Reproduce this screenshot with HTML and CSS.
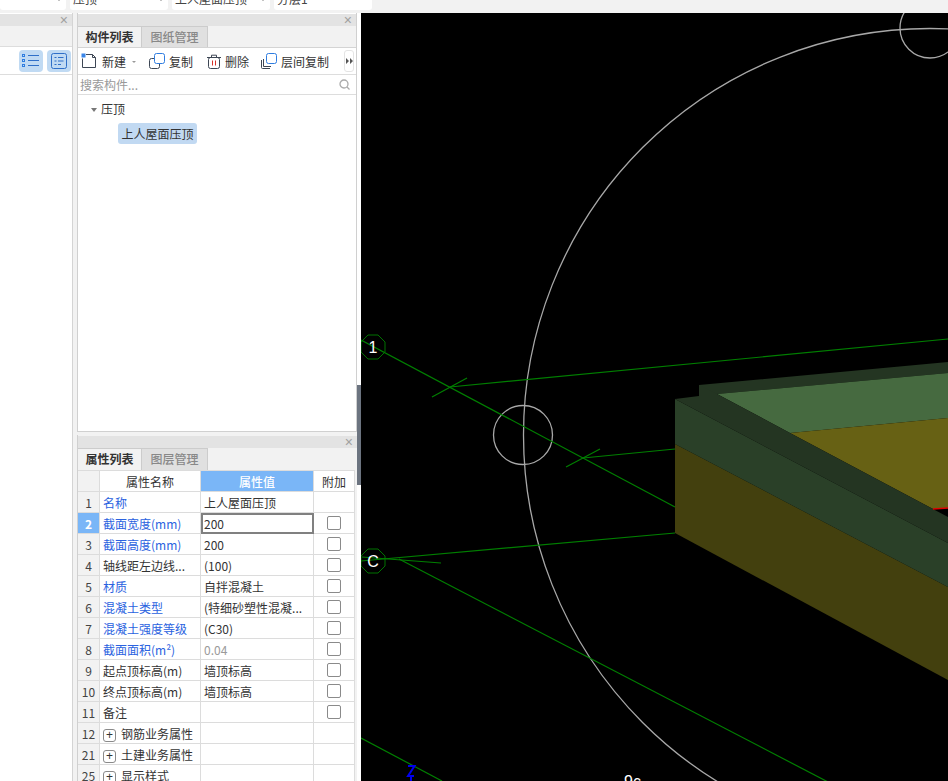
FILE: index.html
```html
<!DOCTYPE html>
<html lang="zh">
<head>
<meta charset="utf-8">
<title>构件属性</title>
<link rel="stylesheet" href="styles.css">
</head>
<body>
<div class="topbar">
  <div class="combo combo-a"><span class="arrow"></span></div>
  <div class="combo combo-b"><span>压顶</span><span class="arrow"></span></div>
  <div class="combo combo-b"><span>上人屋面压顶</span><span class="arrow"></span></div>
  <div class="combo combo-b"><span>分层1</span></div>
</div>
<div class="main">
  <aside class="left">
    <div class="panel-head"><span class="close">×</span></div>
    <div class="left-tabs"></div>
    <div class="left-tools">
      <button class="view-btn">
        <svg width="18" height="14" viewBox="0 0 18 14"><g fill="none" stroke="#2f7de0"><rect x="0.5" y="0.5" width="2" height="2"/><rect x="0.5" y="5.500" width="2" height="2"/><rect x="0.5" y="10.500" width="2" height="2"/></g><path d="M6 1.500h11M6 6.500h11M6 11.500h11" stroke="#2f6fc8"/></svg>
      </button>
      <button class="view-btn">
        <svg width="16" height="16" viewBox="0 0 16 16"><rect x="0.5" y="0.5" width="15" height="15" rx="2" fill="none" stroke="#2f6fc8"/><path d="M3.500 4.500h2M7 4.500h5.500M3.500 8h2M7 8h5.500M3.500 11.500h2M7 11.500h3" stroke="#2f6fc8"/></svg>
      </button>
    </div>
  </aside>
  <div class="middle">
    <section class="panel panel-top">
      <div class="panel-head"><span class="close">×</span></div>
      <div class="tabs">
        <div class="tab active">构件列表</div>
        <div class="tab">图纸管理</div>
      </div>
      <div class="toolbar">
        <span class="tool tool-new">
          <svg width="16" height="16" viewBox="0 0 16 16"><path d="M5 1.500h6.500l3 3v10h-13v-9" fill="none" stroke="#3d4654" stroke-linejoin="round"/><path d="M11.500 1.500v3h3" fill="none" stroke="#3d4654"/><rect x="0.5" y="0.5" width="4" height="4" fill="#3a86e8"/></svg>
          <span>新建</span>
        </span>
        <span class="drop"></span>
        <span class="tool tool-copy">
          <svg width="17" height="16" viewBox="0 0 17 16"><rect x="0.5" y="5.500" width="10" height="10" rx="2" fill="none" stroke="#3d4654"/><rect x="5.500" y="0.5" width="10" height="10" rx="2" fill="#fff" stroke="#2f7de0"/></svg>
          <span>复制</span>
        </span>
        <span class="tool tool-del">
          <svg width="14" height="15" viewBox="0 0 14 15"><path d="M0 3.500h14M4.500 3V1.200h5V3" fill="none" stroke="#3d4654"/><rect x="1.500" y="3.500" width="11" height="11" rx="2" fill="none" stroke="#3d4654"/><path d="M5.500 6.500v5M8.500 6.500v5" stroke="#d8322a"/></svg>
          <span>删除</span>
        </span>
        <span class="tool tool-layer">
          <svg width="16" height="16" viewBox="0 0 16 16"><path d="M0.5 7v7.500a1 1 0 0 0 1 1H9M2.500 6v7.500H10" fill="none" stroke="#3d4654"/><rect x="5.500" y="0.5" width="10" height="10" rx="2" fill="#fff" stroke="#2f7de0"/></svg>
          <span>层间复制</span>
        </span>
        <span class="more"><svg width="7" height="6" viewBox="0 0 7 6"><path d="M0 0l3 3-3 3zM4 0l3 3-3 3z" fill="#555"/></svg></span>
      </div>
      <div class="search">
        <span class="placeholder">搜索构件...</span>
        <svg width="11" height="11" viewBox="0 0 11 11"><circle cx="5" cy="5" r="4" fill="none" stroke="#aaa" stroke-width="1.300"/><path d="M8 8l2.500 2.500" stroke="#aaa" stroke-width="1.300"/></svg>
      </div>
      <div class="tree">
        <div class="node-root"><span class="twist"></span><span>压顶</span></div>
        <div class="node-child"><span class="node-label">上人屋面压顶</span></div>
      </div>
    </section>
    <section class="panel panel-bottom">
      <div class="panel-head"><span class="close">×</span></div>
      <div class="tabs tabs-attr">
        <div class="tab active tab-attr">属性列表</div>
        <div class="tab tab-attr">图层管理</div>
      </div>
      <table class="props">
        <colgroup><col class="c-num"><col class="c-name"><col class="c-val"><col class="c-add"></colgroup>
        <thead>
          <tr><th class="num"></th><th>属性名称</th><th class="val-head">属性值</th><th>附加</th></tr>
        </thead>
        <tbody>
          <tr><td class="num">1</td><td class="link">名称</td><td>上人屋面压顶</td><td></td></tr>
          <tr><td class="num sel">2</td><td class="link">截面宽度(mm)</td><td class="editing">200</td><td><span class="check"></span></td></tr>
          <tr><td class="num">3</td><td class="link">截面高度(mm)</td><td>200</td><td><span class="check"></span></td></tr>
          <tr><td class="num">4</td><td>轴线距左边线...</td><td>(100)</td><td><span class="check"></span></td></tr>
          <tr><td class="num">5</td><td class="link">材质</td><td>自拌混凝土</td><td><span class="check"></span></td></tr>
          <tr><td class="num">6</td><td class="link">混凝土类型</td><td>(特细砂塑性混凝...</td><td><span class="check"></span></td></tr>
          <tr><td class="num">7</td><td class="link">混凝土强度等级</td><td>(C30)</td><td><span class="check"></span></td></tr>
          <tr><td class="num">8</td><td class="link">截面面积(m²)</td><td class="muted">0.04</td><td><span class="check"></span></td></tr>
          <tr><td class="num">9</td><td>起点顶标高(m)</td><td>墙顶标高</td><td><span class="check"></span></td></tr>
          <tr><td class="num">10</td><td>终点顶标高(m)</td><td>墙顶标高</td><td><span class="check"></span></td></tr>
          <tr><td class="num">11</td><td>备注</td><td></td><td><span class="check"></span></td></tr>
          <tr><td class="num">12</td><td><span class="plus">+</span>钢筋业务属性</td><td></td><td></td></tr>
          <tr><td class="num">21</td><td><span class="plus">+</span>土建业务属性</td><td></td><td></td></tr>
          <tr><td class="num">25</td><td><span class="plus">+</span>显示样式</td><td></td><td></td></tr>
        </tbody>
      </table>
    </section>
  </div>
  <div class="splitter"><span class="grip"></span></div>
  <div class="canvas">
    <svg class="scene" viewBox="361 13 587 768" width="587" height="768">
      <g fill="none" stroke="#a8a8a8" stroke-width="1.300">
        <circle cx="930" cy="435" r="406.500"/>
        <circle cx="930" cy="28" r="30"/>
        <circle cx="523" cy="435" r="29.500"/>
      </g>
      <g fill="none" stroke="#007f00" stroke-width="1.200">
        <path d="M361 340L675 507"/>
        <path d="M450 387L948 339"/>
        <path d="M432 397L467 378"/>
        <path d="M583 458L675 449"/>
        <path d="M566 467L600 449"/>
        <path d="M361 561L675 533"/>
        <path d="M362 557L441 563"/>
        <path d="M399 559L830 783"/>
        <path d="M361 738L442 781"/>
      </g>
      <g fill="none" stroke="#007f00" stroke-width="0.900">
        <polygon points="368,335 378,335 385,342 385,352 378,359 368,359 361,352 361,342"/>
        <polygon points="368,549 378,549 385,556 385,566 378,573 368,573 361,566 361,556"/>
      </g>
      <polygon points="675,444 948,587 948,680 675,533" fill="#43400e"/>
      <polygon points="675,399 948,543 948,587 675,444" fill="#2a4028"/>
      <polygon points="699,385 948,362 948,373 717,394 699,396" fill="#243522"/>
      <polygon points="717,394 948,373 948,418 790,433" fill="#466a40"/>
      <polygon points="790,433 948,418 948,508 933,509" fill="#676114"/>
      <polygon points="675,399 699,396 699,385 717,394 790,433 948,517 948,543" fill="#243522"/>
      <path d="M933 509L948 508" stroke="#e00000" stroke-width="1.400"/>
      <path d="M408 766H414.500L408 776H414M411 776V781" fill="none" stroke="#0000ee" stroke-width="2"/>
      <text x="373" y="353" class="axis">1</text>
      <text x="373" y="567" class="axis">C</text>
      <text x="624" y="787" class="axis-num">9c</text>
    </svg>
  </div>
</div>
</body>
</html>
```
FILE: styles.css
```css
* { box-sizing: border-box; }
html, body { margin: 0; height: 100%; }
body {
  width: 948px;
  height: 781px;
  overflow: hidden;
  background: #f2f2f2;
  font-family: "Noto Sans CJK SC", "Noto Sans", sans-serif;
  font-size: 12px;
  color: #333;
  display: flex;
  flex-direction: column;
}

.topbar {
  height: 13px;
  flex: none;
  display: flex;
  align-items: flex-end;
  gap: 4px;
  padding-bottom: 3px;
  overflow: hidden;
  background: #f2f2f2;
}
.combo {
  height: 22px;
  flex: none;
  background: #fff;
  border-radius: 3px;
  display: flex;
  align-items: center;
  justify-content: space-between;
  padding: 0 4px 0 3px;
  font-size: 12px;
  line-height: 22px;
  color: #444;
}
.combo-a { width: 66px; justify-content: flex-end; }
.combo-b { width: 98px; }
.arrow { width: 0; height: 0; margin-top: 3px; border: 3px solid transparent; border-top-color: #888; }

.main { flex: 1; min-height: 0; display: flex; }

.panel-head {
  height: 12px;
  margin-top: 1px;
  flex: none;
  background: #e3e3e3;
  display: flex;
  justify-content: flex-end;
  align-items: center;
  padding-right: 4px;
}
.close { color: #a0a0a0; font: 14px/12px "Liberation Sans", sans-serif; }

.left {
  width: 73px;
  flex: none;
  background: #fff;
  border-right: 1px solid #d4d4d4;
  display: flex;
  flex-direction: column;
}
.left-tabs { height: 21px; flex: none; background: #f2f2f2; border-bottom: 1px solid #ddd; }
.left-tools {
  height: 28px;
  flex: none;
  border-bottom: 1px solid #ddd;
  display: flex;
  justify-content: flex-end;
  align-items: center;
  gap: 4px;
  padding-right: 1px;
}
.view-btn {
  width: 24px;
  height: 22px;
  padding: 0;
  border: 0;
  border-radius: 4px;
  background: #c0daf3;
  display: flex;
  align-items: center;
  justify-content: center;
}

.middle {
  width: 280px;
  margin-left: 4px;
  flex: none;
  display: flex;
  flex-direction: column;
  gap: 3px;
}
.panel {
  background: #fff;
  display: flex;
  flex-direction: column;
  overflow: hidden;
  border-left: 1px solid #d0d0d0;
}
.panel-top { height: 419px; flex: none; border-right: 1px solid #d0d0d0; border-bottom: 1px solid #d0d0d0; }
.panel-bottom { flex: 1; min-height: 0; background: #f2f2f2; }

.tabs {
  height: 22px;
  flex: none;
  display: flex;
  background: #f2f2f2;
  border-bottom: 1px solid #d4d4d4;
}
.tab {
  width: 66px;
  text-align: center;
  line-height: 19px;
  background: #e0e0e0;
  color: #888;
  font-weight: 500;
  border: 1px solid #ccc;
  border-bottom: 0;
  border-left: 0;
}
.tab.active { width: 64px; background: #f2f2f2; color: #333; font-weight: 700; border-left: 0; }
.tabs-attr { height: 22px; border-bottom: 0; }
.tab-attr { line-height: 20px; }

.toolbar {
  height: 27px;
  flex: none;
  display: flex;
  align-items: center;
  border-bottom: 1px solid #ddd;
  padding-left: 3px;
  color: #333;
}
.tool { display: flex; align-items: center; flex: none; }
.tool svg { margin-right: 4px; flex: none; }
.tool-new span { margin-left: 1px; }
.tool-copy { margin-left: 13px; }
.tool-copy svg { margin-right: 3px; }
.tool-del { margin-left: 14px; }
.tool-layer { margin-left: 12px; }
.drop { width: 0; height: 0; margin: 3px 0 0 6px; border: 2.500px solid transparent; border-top-color: #999; flex: none; }
.more {
  margin-left: 15px;
  width: 10px;
  height: 22px;
  flex: none;
  border: 1px solid #e4e4e4;
  border-radius: 3px;
  display: flex;
  align-items: center;
  justify-content: center;
}

.search {
  height: 20px;
  flex: none;
  display: flex;
  align-items: center;
  justify-content: space-between;
  padding: 0 6px 0 2px;
  border-bottom: 1px solid #ddd;
}
.placeholder { color: #999; }

.tree { flex: 1; padding: 3px 0 0 13px; }
.node-root { display: flex; align-items: center; height: 21px; }
.twist { width: 0; height: 0; margin: 3px 4px 0 0; border: 3.500px solid transparent; border-top: 4px solid #777; border-bottom: 0; }
.node-child { margin: 4px 0 0 27px; }
.node-label {
  display: inline-block;
  height: 21px;
  line-height: 21px;
  padding: 0 3px;
  width: 79px;
  text-align: center;
  background: #c1d9f2;
  border-radius: 3px;
}

.props {
  width: 277px;
  margin-left: -1px;
  table-layout: fixed;
  border-collapse: collapse;
  background: #fff;
}
.c-num { width: 22px; }
.c-name { width: 101px; }
.c-val { width: 113px; }
.c-add { width: 41px; }
.props th, .props td {
  height: 21px;
  padding: 0 3px;
  border: 1px solid #dcdcdc;
  font-weight: 400;
  white-space: nowrap;
  overflow: hidden;
  line-height: 19px;
}
.props th { text-align: center; padding: 0; }
.props td:nth-child(4) { text-align: center; }
.props .val-head { background: #7ab6f7; color: #fff; font-weight: 500; }
.props .num { background: #f2f2f2; text-align: center; padding: 0; color: #444; }
.props .num.sel { background: #7ab6f7; color: #fff; font-weight: 700; }
.props .link { color: #2a62e0; }
.props .muted { color: #9a9a9a; }
.props .editing { outline: 2px solid #808080; outline-offset: -2px; }
.check {
  display: inline-block;
  width: 14px;
  height: 14px;
  margin-top: 2px;
  border: 1px solid #8a8a8a;
  border-radius: 2px;
  background: #fff;
  vertical-align: top;
}
.plus {
  display: inline-block;
  width: 13px;
  height: 13px;
  margin: 0 5px 0 0;
  border: 1px solid #8a8a8a;
  border-radius: 3px;
  text-align: center;
  font: 12px/11px "Liberation Sans", sans-serif;
  vertical-align: 0;
}

.splitter {
  width: 4px;
  flex: none;
  background: #fff;
  display: flex;
  align-items: center;
}
.grip { width: 4px; height: 100px; margin-top: 76px; background: #6c7480; }

.canvas { flex: 1; min-width: 0; background: #000; overflow: hidden; }
.scene { display: block; }
.axis { fill: #fff; font: 16px "Liberation Sans", sans-serif; text-anchor: middle; }
.axis-num { fill: #fff; font: 16px "Liberation Sans", sans-serif; }
```
